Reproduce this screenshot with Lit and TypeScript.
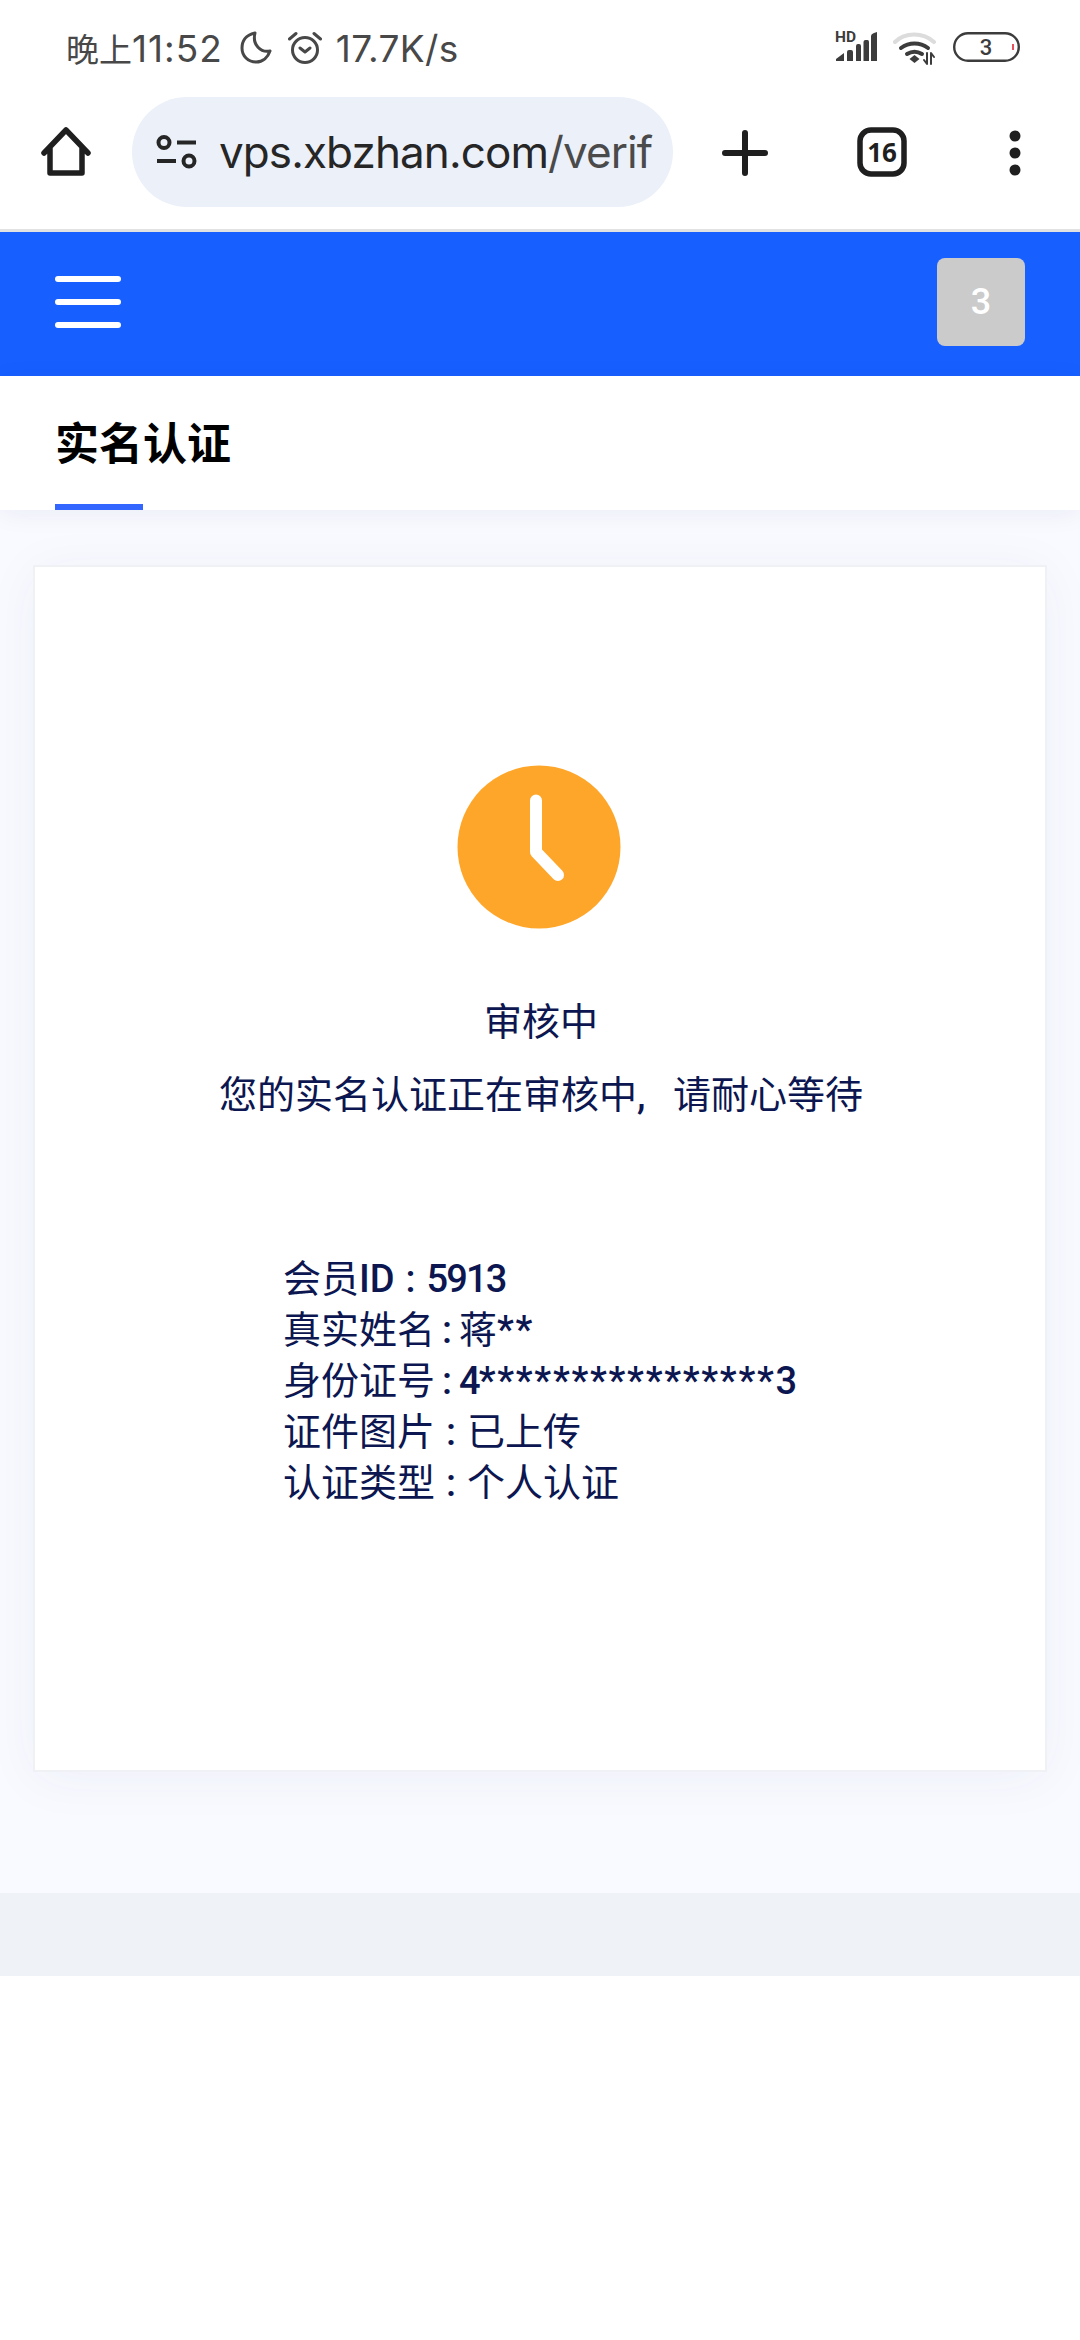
import { LitElement, html, css } from "lit";
import { customElement } from "lit/decorators.js";

@customElement("app-root")
export class AppRoot extends LitElement {
  static styles = css`
    :host { display: block; width: 1080px; height: 2340px; background: #fff; overflow: hidden;
      font-family: "Roboto", "Noto Sans CJK SC", sans-serif; }
    * { box-sizing: border-box; }
    svg { display: block; flex: none; }
    .status { height: 97px; padding: 0 0 0 66px; display: flex; align-items: flex-start; color: #484848; }
    .t { line-height: 40px; margin-top: 29px; font-family: "Inter", "Noto Sans CJK SC", sans-serif; font-size: 37px; letter-spacing: 1px; white-space: nowrap; }
    .t i { font-style: normal; font-size: 33px; letter-spacing: 0; }
    .st-left { display: flex; align-items: flex-start; }
    .moon { margin: 31px 0 0 17px; }
    .alarm { margin: 31px 0 0 16px; }
    .speed { margin-left: 14px; letter-spacing: 0.4px; }
    .st-right { margin-left: auto; display: flex; align-items: flex-start; padding-right: 60px; padding-top: 27px; }
    .wifi { margin-left: 16px; margin-top: 5px; }
    .batt { margin-left: 16px; margin-top: 5px; }
    .browser { height: 132px; display: flex; align-items: flex-start; }
    .home { margin: 30px 0 0 41px; }
    .url { margin-left: 41px; width: 541px; height: 110px; border-radius: 55px; background: #ebf0f9; display: flex; align-items: center; padding-left: 24px; overflow: hidden; }
    .url-text { margin-left: 22px; font-family: "Inter", sans-serif; font-size: 44px; letter-spacing: -0.9px; color: #262626; white-space: nowrap; width: 440px; }
    .url-text span { color: #4a4a4a; }
    .plus { margin: 33px 0 0 49px; }
    .tabs { margin: 30px 0 0 89px; }
    .more { margin: 33px 0 0 101px; }
    .sep { height: 3px; background: #e2e2e2; }
    .bar { height: 144px; background: #175fff; display: flex; align-items: center; justify-content: space-between; padding: 0 55px 4px 55px; }
    .burger { width: 66px; display: flex; flex-direction: column; gap: 17px; }
    .burger i { display: block; height: 6px; border-radius: 3px; background: #fff; }
    .badge { width: 88px; height: 88px; border-radius: 8px; background: #cbcbcb; color: #fff; font-size: 36px; font-weight: 500; display: flex; align-items: center; justify-content: center; }
    .tabbar { height: 134px; background: #fff; padding-left: 55px; position: relative; z-index: 1; box-shadow: 0 4px 24px rgba(20, 40, 110, 0.06); }
    .tab { display: block; height: 134px; width: 88px; font-size: 44px; font-weight: 700; color: #000; white-space: nowrap; line-height: 66px; padding-top: 36px; position: relative; }
    .tab::after { content: ""; position: absolute; left: 0; bottom: 0; width: 88px; height: 6px; background: #3366ff; }
    .main { height: 1383px; padding: 55px 33px 0; background: #f9faff; }
    .card { width: 1014px; height: 1207px; background: #fff; border: 2px solid #eff1f5; box-shadow: 0 6px 50px rgba(30, 50, 130, 0.05); color: #0c1650; font-size: 38px; padding-top: 198px; }
    .clock { margin-left: 422px; }
    .center { text-align: center; margin-left: 2px; }
    .h1 { margin-top: 68px; line-height: 50px; }
    .h2 { margin-top: 23px; line-height: 50px; }
    .cm { font-weight: 500; letter-spacing: 9px; }
    .info { margin: 134px 0 0 248px; line-height: 51px; white-space: nowrap; }
    .info div { height: 51px; }
    .lat { font-weight: 500; }
    .num { font-weight: 500; letter-spacing: -1.9px; }
    .star { font-weight: 500; letter-spacing: 1.700px; }
    .colon { display: inline-block; width: 24px; text-align: center; font-weight: 500; }
    .colon.w { width: 32px; }
    .foot { height: 83px; background: #eff2f7; }
  `;

  render() {
    return html`
      <div class="status">
        <div class="st-left">
          <span class="t"><i>晚上</i>11:52</span>
          <svg class="moon" width="32" height="33" viewBox="0 0 32 33" fill="none" stroke="#484848" stroke-width="3" stroke-linejoin="round"><path d="M15 2C5 4 2 11 2 17c0 8 6 14 14 14 7 0 12-5 14-11-9 2-18-6-15-18z"/></svg>
          <svg class="alarm" width="34" height="33" viewBox="0 0 34 33" fill="none" stroke="#484848" stroke-width="3" stroke-linecap="round" stroke-linejoin="round"><circle cx="17" cy="19" r="12.500"/><path d="M1.500 8L8 2.500M26 2.500L32.500 8M12 17l5 4 5-4"/></svg>
          <span class="t speed">17.7K/s</span>
        </div>
        <div class="st-right">
          <svg width="42" height="34" viewBox="0 -3 42 34" fill="#3c3c3c"><text x="0" y="12" font-family="Roboto" font-weight="700" font-size="15.500">HD</text><path d="M1 31v-2l8-6v8zM12 31V22q0-2 2-2h2q2 0 2 2v9zM21 31V16q0-2 2-2h1q2 0 2 2v15zM28.500 31V12q0-2 2-2h2q1.500 0 1.500 2v19zM36 31V6q0-2 3-3l3-1v29z"/></svg>
          <svg class="wifi" width="44" height="33" viewBox="0 0 44 33" fill="none" stroke-linecap="round"><path d="M2 10C12 0 30 0 41 10" stroke="#dcdcdc" stroke-width="4"/><path d="M8 16c8-6 19-6 27 0M14 22c5-3 10-3 15 0" stroke="#3c3c3c" stroke-width="4"/><path d="M21.500 23l5 4-5 4-5-4z" fill="#3c3c3c"/><path d="M34 21v11l-3-4M38 32V21l3 4" stroke="#3c3c3c" stroke-width="2" stroke-linejoin="round"/></svg>
          <svg class="batt" width="67" height="30" viewBox="0 0 67 30"><rect x="1.200" y="1.200" width="64.600" height="27.600" rx="13.800" fill="none" stroke="#3c3c3c" stroke-width="2.400"/><rect x="59" y="12" width="2" height="6" fill="#e8505b"/><text x="33" y="23" text-anchor="middle" font-family="Roboto" font-size="22" font-weight="500" fill="#3c3c3c">3</text></svg>
        </div>
      </div>
      <div class="browser">
        <svg class="home" width="50" height="50" viewBox="0 0 50 50" fill="none" stroke="#1f1f1f" stroke-width="5.500" stroke-linejoin="round" stroke-linecap="round"><path d="M3 26L25 3l22 23M9 21v25h32V21"/></svg>
        <div class="url">
          <svg width="41" height="34" viewBox="0 0 41 34" fill="none" stroke="#262626" stroke-width="4"><circle cx="8" cy="7.500" r="5.500"/><circle cx="33" cy="26" r="5.500"/><path d="M21 7.500h19M1 26h19"/></svg>
          <div class="url-text">vps.xbzhan.com<span>/verif</span></div>
        </div>
        <svg class="plus" width="46" height="46" viewBox="0 0 46 46" stroke="#1f1f1f" stroke-width="6" stroke-linecap="round"><path d="M23 3v40M3 23h40"/></svg>
        <svg class="tabs" width="50" height="50" viewBox="0 0 50 50"><rect x="3" y="3" width="44" height="44" rx="11" fill="none" stroke="#1f1f1f" stroke-width="5.500"/><text x="25" y="35" text-anchor="middle" font-family="Noto Sans" font-weight="700" font-size="26" fill="#1f1f1f">16</text></svg>
        <svg class="more" width="14" height="46" viewBox="0 0 14 46" fill="#1f1f1f"><circle cx="7" cy="6" r="5.500"/><circle cx="7" cy="23" r="5.500"/><circle cx="7" cy="40" r="5.500"/></svg>
      </div>
      <div class="sep"></div>
      <div class="bar">
        <div class="burger"><i></i><i></i><i></i></div>
        <div class="badge">3</div>
      </div>
      <div class="tabbar"><div class="tab">实名认证</div></div>
      <div class="main">
        <div class="card">
          <svg class="clock" width="164" height="164" viewBox="0 0 164 164"><circle cx="82" cy="82" r="81.500" fill="#fea629"/><path d="M79 35.500V87l22 23" fill="none" stroke="#fff" stroke-width="12" stroke-linecap="round" stroke-linejoin="round"/></svg>
          <div class="center h1">审核中</div>
          <div class="center h2">您的实名认证正在审核中<span class="cm">, </span>请耐心等待</div>
          <div class="info">
            <div>会员<span class="lat">ID</span><span class="colon w">:</span><span class="num">5913</span></div>
            <div>真实姓名<span class="colon">:</span>蒋<span class="star">**</span></div>
            <div>身份证号<span class="colon">:</span><span class="num">4</span><span class="star">****************</span><span class="num">3</span></div>
            <div>证件图片<span class="colon w">:</span>已上传</div>
            <div>认证类型<span class="colon w">:</span>个人认证</div>
          </div>
        </div>
      </div>
      <div class="foot"></div>
    `;
  }
}
